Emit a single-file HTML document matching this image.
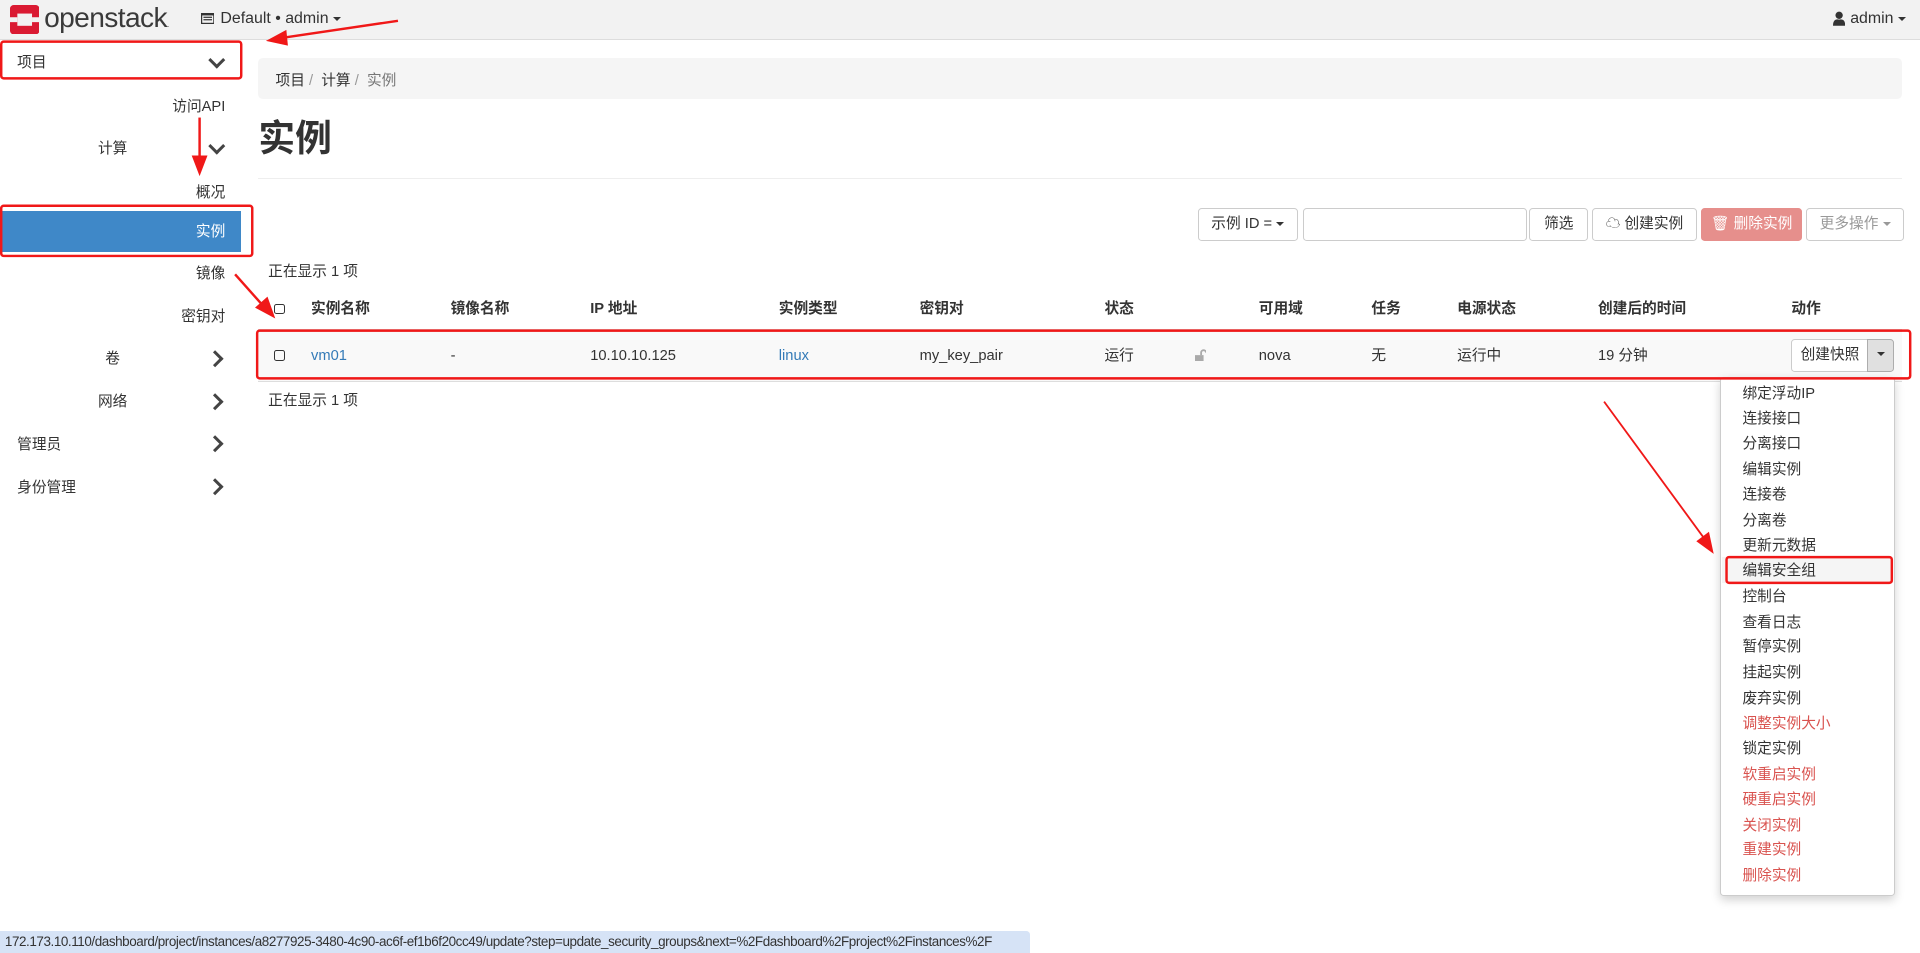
<!DOCTYPE html>
<html><head><meta charset="utf-8">
<style>
html,body{margin:0;padding:0;background:#fff;overflow:hidden}
body{width:1920px;height:953px;}
#w{zoom:1.22449;position:relative;width:1568px;height:778px;overflow:hidden;font-family:"Liberation Sans","Noto Sans CJK SC",sans-serif;font-size:12px;color:#333}
.a{position:absolute;white-space:nowrap;line-height:14px}
.t{margin-top:2px}
.top{left:0;top:0;width:1568px;height:32px;background:#f2f2f2;border-bottom:1px solid #ddd}
.sb{right:1384px;text-align:right}
.chev{position:absolute;left:172px;width:7px;height:7px;border-right:2.5px solid #444;border-bottom:2.5px solid #444}
.down{transform:rotate(45deg)}
.right{transform:rotate(-45deg)}
.btn{position:absolute;top:170px;height:27px;border:1px solid #ccc;border-radius:3px;background:#fff;box-sizing:border-box;line-height:25px;text-align:center;font-size:12px;color:#333}
.th{font-weight:bold;top:246px}
.td{top:284px}
.cb{position:absolute;width:7px;height:7px;border:1px solid #333;border-radius:2px}
.mi{position:absolute;left:1423px;font-size:12px;color:#333;line-height:14px;white-space:nowrap;margin-top:2px}
.red{color:#d9534f}
.caret{display:inline-block;border-left:4px solid transparent;border-right:4px solid transparent;border-top:4px solid #333;vertical-align:middle}
</style></head><body><div id="w">
<div class="a top"></div>
<svg class="a" style="left:8px;top:4px" width="24" height="24" viewBox="0 0 24 24"><rect x="0" y="0" width="24" height="24" rx="3" fill="#da1a32"/><rect x="6" y="7" width="12" height="10" fill="#f2f2f2"/><rect x="0" y="10" width="6" height="4" fill="#f2f2f2"/><rect x="18" y="10" width="6" height="4" fill="#f2f2f2"/></svg>
<div class="a" style="left:36px;top:2px;font-size:23px;line-height:26px;color:#3a3a3a;letter-spacing:-0.5px">openstack<span style="font-size:7px">.</span></div>
<svg class="a" style="left:164px;top:11px" width="11" height="9"><rect x=".5" y=".5" width="10" height="8" fill="none" stroke="#333"/><rect x="2" y="3" width="7" height="1" fill="#333"/><rect x="2" y="5" width="7" height="1" fill="#333"/><rect x="0" y="0" width="11" height="2" fill="#333"/></svg>
<div class="a" style="left:180px;top:8px;font-size:13px">Default • admin <span class="caret"></span></div>
<svg class="a" style="left:1497px;top:9px" width="10" height="12"><circle cx="5" cy="3.5" r="3" fill="#333"/><path d="M0 12 Q0 6 5 7 Q10 6 10 12Z" fill="#333"/></svg>
<div class="a" style="left:1511px;top:8px;font-size:13px">admin <span class="caret"></span></div>

<div class="a t" style="left:14px;top:43px">项目</div>
<div class="chev down" style="top:44px"></div>
<div class="a sb t" style="top:79px">访问API</div>
<div class="a t" style="left:80px;top:113px">计算</div>
<div class="chev down" style="top:114px"></div>
<div class="a sb t" style="top:149px">概况</div>
<div class="a" style="left:0;top:172px;width:197px;height:34px;background:#3f88c8"></div>
<div class="a sb t" style="top:181px;color:#fff">实例</div>
<div class="a sb t" style="top:215px">镜像</div>
<div class="a sb t" style="top:250px">密钥对</div>
<div class="a t" style="left:86px;top:285px">卷</div>
<div class="chev right" style="top:288px;left:171px"></div>
<div class="a t" style="left:80px;top:320px">网络</div>
<div class="chev right" style="top:323px;left:171px"></div>
<div class="a t" style="left:14px;top:355px">管理员</div>
<div class="chev right" style="top:358px;left:171px"></div>
<div class="a t" style="left:14px;top:390px">身份管理</div>
<div class="chev right" style="top:393px;left:171px"></div>

<div class="a" style="left:211px;top:47px;width:1342px;height:34px;background:#f5f5f5;border-radius:4px"></div>
<div class="a t" style="left:225px;top:58px">项目 <span style="color:#999">/</span>&nbsp; 计算 <span style="color:#999">/</span>&nbsp; <span style="color:#777">实例</span></div>
<div class="a" style="left:211px;top:96px;font-size:30px;line-height:34px;color:#333;font-weight:bold">实例</div>
<div class="a" style="left:211px;top:145px;width:1342px;height:1px;background:#eee"></div>

<div class="btn" style="left:978px;width:82px">示例 ID = <span class="caret"></span></div>
<div class="btn" style="left:1064px;width:183px"></div>
<div class="btn" style="left:1249px;width:48px">筛选</div>
<div class="btn" style="left:1300px;width:86px">☁ 创建实例</div>
<div class="btn" style="left:1389px;width:83px;background:#e68f8c;border-color:#e68f8c;color:#fff">🗑 删除实例</div>
<div class="btn" style="left:1475px;width:80px;color:#999">更多操作 <span class="caret" style="border-top-color:#999"></span></div>

<div class="a t" style="left:219px;top:214px">正在显示 1 项</div>
<div class="cb" style="left:224px;top:248px"></div>
<div class="a th" style="left:254px">实例名称</div>
<div class="a th" style="left:368px">镜像名称</div>
<div class="a th" style="left:482px">IP 地址</div>
<div class="a th" style="left:636px">实例类型</div>
<div class="a th" style="left:751px">密钥对</div>
<div class="a th" style="left:902px">状态</div>
<div class="a th" style="left:1028px">可用域</div>
<div class="a th" style="left:1120px">任务</div>
<div class="a th" style="left:1190px">电源状态</div>
<div class="a th" style="left:1305px">创建后的时间</div>
<div class="a th" style="left:1463px">动作</div>
<div class="a" style="left:211px;top:269px;width:1342px;height:2px;background:#ddd"></div>
<div class="a" style="left:211px;top:271px;width:1342px;height:40px;background:#f9f9f9"></div>
<div class="a" style="left:211px;top:311px;width:1342px;height:1px;background:#ddd"></div>
<div class="cb" style="left:224px;top:286px"></div>
<div class="a td" style="left:254px;color:#337ab7">vm01</div>
<div class="a td" style="left:368px">-</div>
<div class="a td" style="left:482px">10.10.10.125</div>
<div class="a td" style="left:636px;color:#337ab7">linux</div>
<div class="a td" style="left:751px">my_key_pair</div>
<div class="a td" style="left:902px">运行</div>
<svg class="a" style="left:976px;top:285px" width="9" height="10"><rect x="0" y="5" width="7" height="5" fill="#aaa"/><path d="M5 5 V3 a2 2 0 0 1 4 0" stroke="#aaa" stroke-width="1.5" fill="none"/></svg>
<div class="a td" style="left:1028px">nova</div>
<div class="a td" style="left:1120px">无</div>
<div class="a td" style="left:1190px">运行中</div>
<div class="a td" style="left:1305px">19 分钟</div>
<div class="a" style="left:1463px;top:277px;width:63px;height:27px;border:1px solid #ccc;border-radius:3px 0 0 3px;box-sizing:border-box;background:#fff;line-height:25px;text-align:center">创建快照</div>
<div class="a" style="left:1525px;top:277px;width:22px;height:27px;border:1px solid #adadad;border-radius:0 3px 3px 0;box-sizing:border-box;background:#e0e0e0;text-align:center;line-height:23px"><span class="caret"></span></div>
<div class="a t" style="left:219px;top:319px">正在显示 1 项</div>

<div class="a" style="left:1405px;top:308px;width:141px;height:422px;background:#fff;border:1px solid #ccc;border-radius:3px;box-shadow:0 3px 8px rgba(0,0,0,.18)"></div>
<div class="a" style="left:1406px;top:455px;width:140px;height:21px;background:#f5f5f5"></div>
<div class="mi" style="top:313px">绑定浮动IP</div>
<div class="mi" style="top:334px">连接接口</div>
<div class="mi" style="top:354px">分离接口</div>
<div class="mi" style="top:375px">编辑实例</div>
<div class="mi" style="top:396px">连接卷</div>
<div class="mi" style="top:417px">分离卷</div>
<div class="mi" style="top:437px">更新元数据</div>
<div class="mi" style="top:458px">编辑安全组</div>
<div class="mi" style="top:479px">控制台</div>
<div class="mi" style="top:500px">查看日志</div>
<div class="mi" style="top:520px">暂停实例</div>
<div class="mi" style="top:541px">挂起实例</div>
<div class="mi" style="top:562px">废弃实例</div>
<div class="mi red" style="top:583px">调整实例大小</div>
<div class="mi" style="top:603px">锁定实例</div>
<div class="mi red" style="top:624px">软重启实例</div>
<div class="mi red" style="top:645px">硬重启实例</div>
<div class="mi red" style="top:666px">关闭实例</div>
<div class="mi red" style="top:686px">重建实例</div>
<div class="mi red" style="top:707px">删除实例</div>

<svg class="a" style="left:0;top:0" width="1568" height="778">
<g fill="none" stroke="#f01818" stroke-width="2">
<rect x="1" y="34" width="196" height="30" rx="2"/>
<rect x="1" y="168" width="205" height="41" rx="2"/>
<rect x="210" y="270" width="1350" height="39" rx="2"/>
<rect x="1410" y="455" width="135" height="21" rx="2"/>
</g>
<g stroke="#f01818" stroke-width="2" fill="#f01818">
<line x1="325" y1="17" x2="230" y2="31"/><polygon points="220,33 233,26 234,36"/>
<line x1="163" y1="96" x2="163" y2="130"/><polygon points="163,141 158,128 168,128"/>
<line x1="192" y1="224" x2="216" y2="251"/><polygon points="223,258 210,251 218,244"/>
<line x1="1310" y1="328" x2="1392" y2="440" stroke-width="1.5"/><polygon points="1398,450 1387,442 1395,436"/>
</g>
</svg>

<div class="a" style="left:0;top:760px;width:841px;height:18px;background:#d6e3f6;border-radius:0 3px 0 0"></div>
<div class="a" style="left:4px;top:762px;font-size:11px;color:#333;letter-spacing:-0.35px">172.173.10.110/dashboard/project/instances/a8277925-3480-4c90-ac6f-ef1b6f20cc49/update?step=update_security_groups&amp;next=%2Fdashboard%2Fproject%2Finstances%2F</div>
</div></body></html>
